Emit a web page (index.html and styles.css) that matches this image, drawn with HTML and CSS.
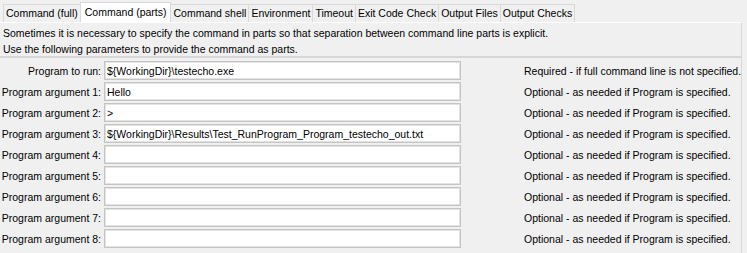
FILE: index.html
```html
<!DOCTYPE html>
<html lang="en">
<head>
    <meta charset="UTF-8">
    <title>Command (parts)</title>
    <link rel="stylesheet" href="styles.css">
</head>
<body>

    <div class="editor">
        <!-- Tab strip -->
        <div class="tabs">
            <div class="tab">Command (full)</div>
            <div class="tab tab-active">Command (parts)</div>
            <div class="tab">Command shell</div>
            <div class="tab">Environment</div>
            <div class="tab">Timeout</div>
            <div class="tab">Exit Code Check</div>
            <div class="tab">Output Files</div>
            <div class="tab">Output Checks</div>
        </div>

        <!-- Tab content -->
        <div class="panel">
            <div class="intro">
                <p>Sometimes it is necessary to specify the command in parts so that separation between command line parts is explicit.</p>
                <p>Use the following parameters to provide the command as parts.</p>
            </div>

            <div class="form">
                <label class="field-label">Program to run:</label>
                <input class="field-input" type="text" value="${WorkingDir}\testecho.exe">
                <span class="field-note">Required - if full command line is not specified.</span>

                <label class="field-label">Program argument 1:</label>
                <input class="field-input" type="text" value="Hello">
                <span class="field-note">Optional - as needed if Program is specified.</span>

                <label class="field-label">Program argument 2:</label>
                <input class="field-input" type="text" value="&gt;">
                <span class="field-note">Optional - as needed if Program is specified.</span>

                <label class="field-label">Program argument 3:</label>
                <input class="field-input" type="text" value="${WorkingDir}\Results\Test_RunProgram_Program_testecho_out.txt">
                <span class="field-note">Optional - as needed if Program is specified.</span>

                <label class="field-label">Program argument 4:</label>
                <input class="field-input" type="text" value="">
                <span class="field-note">Optional - as needed if Program is specified.</span>

                <label class="field-label">Program argument 5:</label>
                <input class="field-input" type="text" value="">
                <span class="field-note">Optional - as needed if Program is specified.</span>

                <label class="field-label">Program argument 6:</label>
                <input class="field-input" type="text" value="">
                <span class="field-note">Optional - as needed if Program is specified.</span>

                <label class="field-label">Program argument 7:</label>
                <input class="field-input" type="text" value="">
                <span class="field-note">Optional - as needed if Program is specified.</span>

                <label class="field-label">Program argument 8:</label>
                <input class="field-input" type="text" value="">
                <span class="field-note">Optional - as needed if Program is specified.</span>
            </div>
        </div>
    </div>

</body>
</html>
```

FILE: styles.css
```css
/* Reset and page */
*, *::before, *::after {
    box-sizing: border-box;
    margin: 0;
    padding: 0;
}

body {
    font-family: 'Liberation Sans', Arial, sans-serif;
    font-size: 10.5px;
    color: #000;
    background-color: #f0f0f0;
    width: 747px;
    height: 253px;
    overflow: hidden;
}

.editor {
    width: 742px;
}

/* Tab strip */
.tabs {
    display: flex;
    align-items: flex-end;
    padding: 2px 0 0 3px;
    height: 22px;
}

.tab {
    height: 18px;
    line-height: 16px;
    padding: 0 2px;
    border: 1px solid #d9d9d9;
    border-bottom: none;
    margin-right: -1px;
    background-color: #f0f0f0;
    white-space: nowrap;
}

.tab-active {
    height: 20px;
    line-height: 18px;
    padding: 0 4px;
    background-color: #fff;
    position: relative;
    z-index: 1;
}

/* Content panel */
.panel {
    border-top: 1px solid #fff;
    border-right: 1px solid #d9d9d9;
    height: 231px;
}

.intro {
    padding: 2px 3px 0;
    height: 35px;
    border-bottom: 2px solid #d6d6d6;
}

.intro p {
    line-height: 16px;
}

/* Parameter rows */
.form {
    display: grid;
    grid-template-columns: 101px 357px 1fr;
    column-gap: 3px;
    row-gap: 2px;
    align-items: center;
    padding-top: 3px;
}

.field-label {
    text-align: right;
    white-space: nowrap;
}

.field-input {
    height: 19px;
    width: 357px;
    font-family: inherit;
    font-size: 10.5px;
    padding: 0 2px;
    background-color: #fff;
    border: 1px solid #c4c4c4;
    outline: 1px solid #e3e3e3;
    outline-offset: -2px;
    color: #000;
}

.field-note {
    padding-left: 60px;
    white-space: nowrap;
}
```
